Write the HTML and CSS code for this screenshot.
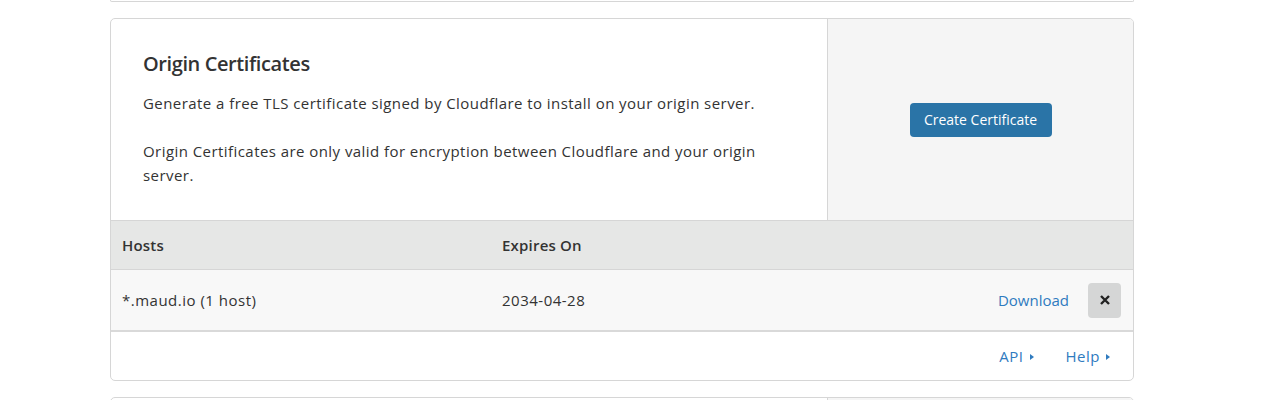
FILE: index.html
```html
<!DOCTYPE html>
<html>
<head>
<meta charset="utf-8">
<link rel="stylesheet" href="styles.css">
</head>
<body>
<div class="page">
  <div class="card card-prev"></div>

  <div class="card">
    <div class="intro">
      <div class="intro-text">
        <h2 class="title">Origin Certificates</h2>
        <p>Generate a free TLS certificate signed by Cloudflare to install on your origin server.</p>
        <p>Origin Certificates are only valid for encryption between Cloudflare and your origin server.</p>
      </div>
      <div class="intro-action">
        <button class="btn-primary">Create Certificate</button>
      </div>
    </div>

    <div class="table">
      <div class="thead">
        <div class="cell">Hosts</div>
        <div class="cell">Expires On</div>
        <div class="cell"></div>
      </div>
      <div class="trow">
        <div class="cell">*.maud.io (1 host)</div>
        <div class="cell">2034-04-28</div>
        <div class="cell actions">
          <a class="link">Download</a>
          <button class="btn-remove" aria-label="Remove">
            <svg width="12" height="12" viewBox="0 0 12 12"><path d="M2 2 L10 10 M10 2 L2 10" stroke="#222" stroke-width="2.4" stroke-linecap="butt"/></svg>
          </button>
        </div>
      </div>
    </div>

    <div class="footer">
      <a class="link footer-link">API<span class="caret"></span></a>
      <a class="link footer-link">Help<span class="caret"></span></a>
    </div>
  </div>

  <div class="card card-next">
    <div class="intro">
      <div class="intro-text"></div>
      <div class="intro-action"></div>
    </div>
  </div>
</div>
</body>
</html>
```

FILE: styles.css
```css
html, body {
  margin: 0;
  padding: 0;
  background: #ffffff;
  height: 400px;
  overflow: hidden;
}

body {
  font-family: "Open Sans", "Liberation Sans", sans-serif;
  color: #333333;
  font-size: 15px;
}

.page {
  width: 1024px;
  margin-left: 110px;
  display: flex;
  flex-direction: column;
  gap: 16px;
}

.card {
  border: 1px solid #d6d6d6;
  border-radius: 5px;
  background: #ffffff;
  overflow: hidden;
}

.card-prev {
  height: 1px;
  border-top: none;
  border-radius: 0 0 5px 5px;
}

.intro {
  display: flex;
  height: 201px;
}

.intro-text {
  width: 716px;
  flex: 0 0 716px;
  box-sizing: border-box;
  padding: 33px 32px 32px 32px;
}

.title {
  margin: 0 0 15px 0;
  font-size: 20px;
  line-height: 24px;
  font-weight: 600;
  letter-spacing: -0.4px;
  color: #333333;
}

.intro-text p {
  margin: 0 0 24px 0;
  line-height: 24px;
  font-size: 15px;
  letter-spacing: 0.44px;
}

.intro-text p:last-child {
  margin-bottom: 0;
}

.intro-action {
  flex: 1;
  border-left: 1px solid #d6d6d6;
  background: #f5f5f5;
  display: flex;
  align-items: center;
  justify-content: center;
}

.btn-primary {
  font-family: "Open Sans", "Liberation Sans", sans-serif;
  font-size: 14px;
  color: #ffffff;
  background: #2a74a7;
  border: none;
  border-radius: 4px;
  height: 34px;
  padding: 0 14px;
  width: 142px;
}

.table {
  border-top: 1px solid #d6d6d6;
}

.thead, .trow {
  display: grid;
  grid-template-columns: 380px 1fr auto;
  align-items: center;
}

.thead {
  height: 48px;
  background: #e6e7e6;
  border-bottom: 1px solid #d6d6d6;
  font-weight: 600;
  letter-spacing: 0.2px;
}

.trow {
  height: 60px;
  background: #f8f8f8;
  border-bottom: 2px solid #d9d9d9;
  letter-spacing: 0.5px;
}

.cell {
  padding-left: 11px;
}

.actions {
  display: flex;
  align-items: center;
  gap: 19px;
  padding-right: 12px;
  letter-spacing: 0;
}

.link {
  color: #2f7bbf;
  text-decoration: none;
  display: inline-flex;
  align-items: center;
}

.footer-link {
  letter-spacing: 0.5px;
}

.btn-remove {
  width: 33px;
  height: 35px;
  border: none;
  border-radius: 4px;
  background: #d5d6d6;
  display: flex;
  align-items: center;
  justify-content: center;
  padding: 0;
}

.footer {
  height: 48px;
  display: flex;
  align-items: center;
  justify-content: flex-end;
  gap: 32px;
  padding-right: 23px;
}

.caret {
  display: inline-block;
  width: 0;
  height: 0;
  border-top: 3px solid transparent;
  border-bottom: 3px solid transparent;
  border-left: 4px solid #2f7bbf;
  margin-left: 6px;
  margin-top: 1px;
}

.card-next {
  height: 60px;
  border-radius: 5px 5px 0 0;
}
```
